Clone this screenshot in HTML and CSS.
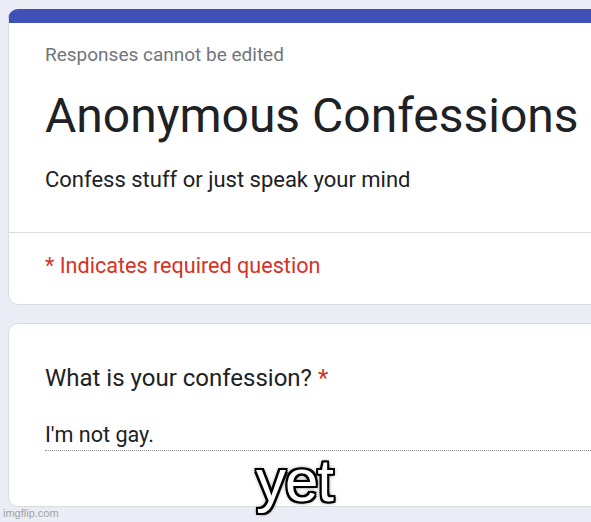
FILE: index.html
```html
<!DOCTYPE html>
<html lang="en">
<head>
    <meta charset="UTF-8">
    <meta name="viewport" content="width=device-width, initial-scale=1.0">
    <title>Anonymous Confessions</title>
    <link rel="stylesheet" href="styles.css">
</head>
<body>
    <div class="form">
        <div class="card header-card">
            <div class="header-top">
                <div class="note">Responses cannot be edited</div>
                <h1 class="title">Anonymous Confessions</h1>
                <div class="desc">Confess stuff or just speak your mind</div>
            </div>
            <div class="required-note">* Indicates required question</div>
        </div>

        <div class="card question-card">
            <div class="question">What is your confession? <span class="star">*</span></div>
            <div class="answer">I'm not gay.</div>
        </div>
    </div>

    <div class="caption">yet</div>
    <div class="watermark">imgflip.com</div>
</body>
</html>
```

FILE: styles.css
```css
html, body { margin: 0; padding: 0; }
body { background: #eaecf6; font-family: Roboto, "Liberation Sans", sans-serif; color: #202124; overflow: hidden; width: 591px; height: 522px; position: relative; }

.form { padding: 9px 0 0 8px; display: flex; flex-direction: column; gap: 18px; }
.card { width: 640px; background: #fff; border: 1px solid #dadce0; border-radius: 10px; box-sizing: border-box; }

.header-card { border-top: 14px solid #3f51b5; }
.header-top { padding: 20px 36px 38px; border-bottom: 1px solid #dadce0; }
.note { font-size: 19px; line-height: 24px; color: #70757a; }
.title { margin: 21px 0 0; font-size: 48px; line-height: 56px; font-weight: 400; }
.desc { margin-top: 22px; font-size: 22px; line-height: 28px; }
.required-note { padding: 19px 36px 24px; font-size: 21.6px; line-height: 28px; color: #d93025; }

.question-card { padding: 40px 0 55px 36px; }
.question { font-size: 24px; line-height: 28px; }
.star { color: #d93025; }
.answer { margin-top: 29px; font-size: 21.6px; line-height: 28px; padding-bottom: 1px; border-bottom: 1px dotted #8f9399; }

.caption { position: absolute; left: 256px; top: 452px; font-family: "Liberation Sans", Arial, sans-serif; font-size: 60px; line-height: 58px; color: #fff; letter-spacing: -1px;
    text-shadow: 2px 0 0 #000, -2px 0 0 #000, 0 2px 0 #000, 0 -2px 0 #000, 2px 2px 0 #000, -2px -2px 0 #000, 2px -2px 0 #000, -2px 2px 0 #000, 0 0 3px #000, 0 0 5px #000; }
.watermark { position: absolute; left: 3px; top: 506px; font-family: "Liberation Sans", Arial, sans-serif; font-size: 11px; line-height: 14px; color: #a3a3a3; }
```
